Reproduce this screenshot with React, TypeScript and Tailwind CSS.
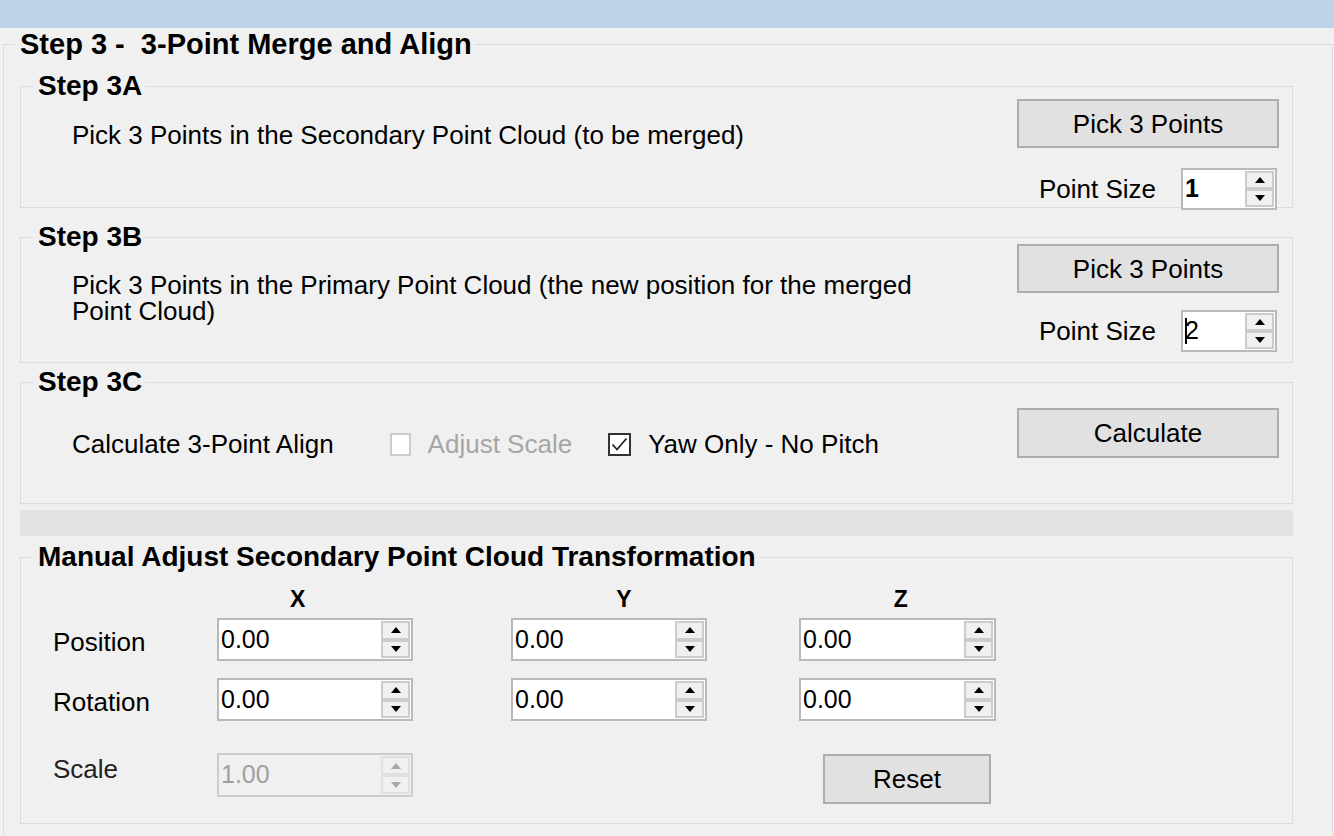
import React from "react";
import clsx from "clsx";

const Arrow = ({ up, disabled }: { up?: boolean; disabled?: boolean }) => (
  <svg width="10" height="6" viewBox="0 0 10 6">
    <path
      d={up ? "M0 6 L5 0 L10 6 Z" : "M0 0 L5 6 L10 0 Z"}
      fill={disabled ? "#a8a8a8" : "#000"}
    />
  </svg>
);

const Spinner = ({
  value,
  className,
  disabled,
  bold,
  caret,
}: {
  value: string;
  className: string;
  disabled?: boolean;
  bold?: boolean;
  caret?: boolean;
}) => (
  <div
    className={clsx(
      "flex border-2",
      disabled ? "border-[#cdcdcd] bg-[#f0f0f0]" : "border-[#b9b9b9] bg-white",
      className
    )}
  >
    <div
      className={clsx(
        "flex flex-1 items-center pb-[1px] pl-[2px] text-[25px] leading-none",
        disabled ? "text-[#a0a0a0]" : "text-black",
        bold && "font-bold"
      )}
    >
      {caret && <span className="mr-[-2px] h-[26px] w-[2px] bg-black" />}
      {value}
    </div>
    <div className="flex w-[30px] flex-col py-[1px] pr-[1px]">
      <div
        className={clsx(
          "flex flex-1 items-center justify-center border-2 bg-[#f0f0f0]",
          disabled ? "border-[#e0e0e0]" : "border-[#cccccc]"
        )}
      >
        <Arrow up disabled={disabled} />
      </div>
      <div
        className={clsx(
          "flex flex-1 items-center justify-center border-2 bg-[#f0f0f0]",
          disabled ? "border-[#e0e0e0]" : "border-[#cccccc]"
        )}
      >
        <Arrow disabled={disabled} />
      </div>
    </div>
  </div>
);

const Button = ({ label, className }: { label: string; className: string }) => (
  <button
    className={clsx(
      "flex items-center justify-center border-2 border-[#adadad] bg-[#e1e1e1] text-[26px] leading-none text-black",
      className
    )}
  >
    {label}
  </button>
);

const Legend = ({ title, className }: { title: string; className?: string }) => (
  <legend
    className={clsx(
      "whitespace-pre pl-[5px] pr-[3px] text-[28px] font-bold leading-[32px] text-black",
      className
    )}
  >
    {title}
  </legend>
);

const PointSizeRow = ({ value, bold, caret }: { value: string; bold?: boolean; caret?: boolean }) => (
  <div className="flex items-center justify-end gap-[25px] pr-[2px]">
    <span className="text-[26px] leading-none">Point Size</span>
    <Spinner value={value} bold={bold} caret={caret} className="h-[42px] w-[96px]" />
  </div>
);

const Step3A = () => (
  <fieldset className="border border-[#dcdcdc]">
    <Legend title="Step 3A" className="ml-[12px]" />
    <div className="flex items-start justify-between">
      <p className="pl-[51px] pt-[18px] text-[26px] leading-[30px]">
        Pick 3 Points in the Secondary Point Cloud (to be merged)
      </p>
      <div className="mb-[-3px] mr-[13px] mt-[-3px] flex w-[262px] flex-col gap-[20px]">
        <Button label="Pick 3 Points" className="h-[49px] w-[262px]" />
        <PointSizeRow value="1" bold />
      </div>
    </div>
  </fieldset>
);

const Step3B = () => (
  <fieldset className="mt-[13px] border border-[#dcdcdc]">
    <Legend title="Step 3B" className="ml-[12px]" />
    <div className="flex items-start justify-between">
      <p className="w-[930px] pl-[51px] pt-[19px] text-[26px] leading-[26px]">
        Pick 3 Points in the Primary Point Cloud (the new position for the merged Point Cloud)
      </p>
      <div className="mb-[10px] mr-[13px] mt-[-9px] flex w-[262px] flex-col gap-[17px]">
        <Button label="Pick 3 Points" className="h-[49px] w-[262px]" />
        <PointSizeRow value="2" caret />
      </div>
    </div>
  </fieldset>
);

const Step3C = () => (
  <fieldset className="mt-[3px] border border-[#dcdcdc]">
    <Legend title="Step 3C" className="ml-[12px]" />
    <div className="flex items-start justify-between">
      <div className="flex items-center pl-[51px] pt-[31px] text-[26px] leading-[30px]">
        <span>Calculate 3-Point Align</span>
        <span className="ml-[56px] h-[23px] w-[21px] border-2 border-[#cccccc] bg-white" />
        <span className="ml-[17px] text-[#a6a6a6]">Adjust Scale</span>
        <span className="ml-[36px] flex h-[23px] w-[23px] items-center justify-center border-2 border-[#333333] bg-white">
          <svg width="17" height="15" viewBox="0 0 17 15">
            <path d="M1.5 7.5 L6 12.5 L15.5 1.5" fill="none" stroke="#222" strokeWidth="1.8" />
          </svg>
        </span>
        <span className="ml-[17px]">Yaw Only - No Pitch</span>
      </div>
      <div className="mb-[45px] mr-[13px] mt-[10px]">
        <Button label="Calculate" className="h-[50px] w-[262px]" />
      </div>
    </div>
  </fieldset>
);

const Manual = () => (
  <fieldset className="mt-[5px] border border-[#dcdcdc]">
    <Legend title="Manual Adjust Secondary Point Cloud Transformation" className="ml-[12px]" />
    <div className="flex flex-col pb-[19px] pl-[32px] text-[26px]">
      <div className="mt-[13px] flex h-[26px] items-center text-[23px] font-bold leading-none">
        <span className="ml-[237px]">X</span>
        <span className="ml-[311px]">Y</span>
        <span className="ml-[262px]">Z</span>
      </div>
      <div className="mt-[6px] flex items-center">
        <span className="w-[164px] pt-[4px] leading-none">Position</span>
        <Spinner value="0.00" className="h-[43px] w-[196px]" />
        <Spinner value="0.00" className="ml-[98px] h-[43px] w-[196px]" />
        <Spinner value="0.00" className="ml-[92px] h-[43px] w-[197px]" />
      </div>
      <div className="mt-[17px] flex items-center">
        <span className="w-[164px] pt-[4px] leading-none">Rotation</span>
        <Spinner value="0.00" className="h-[43px] w-[196px]" />
        <Spinner value="0.00" className="ml-[98px] h-[43px] w-[196px]" />
        <Spinner value="0.00" className="ml-[92px] h-[43px] w-[197px]" />
      </div>
      <div className="mt-[32px] flex items-start">
        <span className="mt-[1px] w-[164px] leading-[30px] text-[#222222]">Scale</span>
        <Spinner value="1.00" disabled className="h-[44px] w-[196px]" />
        <Button label="Reset" className="ml-[410px] mt-[1px] h-[50px] w-[168px]" />
      </div>
    </div>
  </fieldset>
);

export default function App() {
  return (
    <div className="h-[836px] w-[1334px] overflow-hidden bg-[#f0f0f0] font-['Liberation_Sans',Arial,sans-serif] text-black">
      <div className="h-[28px] bg-[#bed2e9]" />
      <div className="pl-[3px]">
        <fieldset className="w-[1330px] border border-[#dcdcdc] pb-[30px] pl-[16px] pr-[39px] pt-0">
          <Legend title="Step 3 -  3-Point Merge and Align" className="ml-[-5px] text-[29px]" />
          <div className="pt-[10px]">
            <Step3A />
            <Step3B />
            <Step3C />
            <div className="mt-[6px] h-[26px] bg-[#e3e3e3]" />
            <Manual />
          </div>
        </fieldset>
      </div>
    </div>
  );
}
